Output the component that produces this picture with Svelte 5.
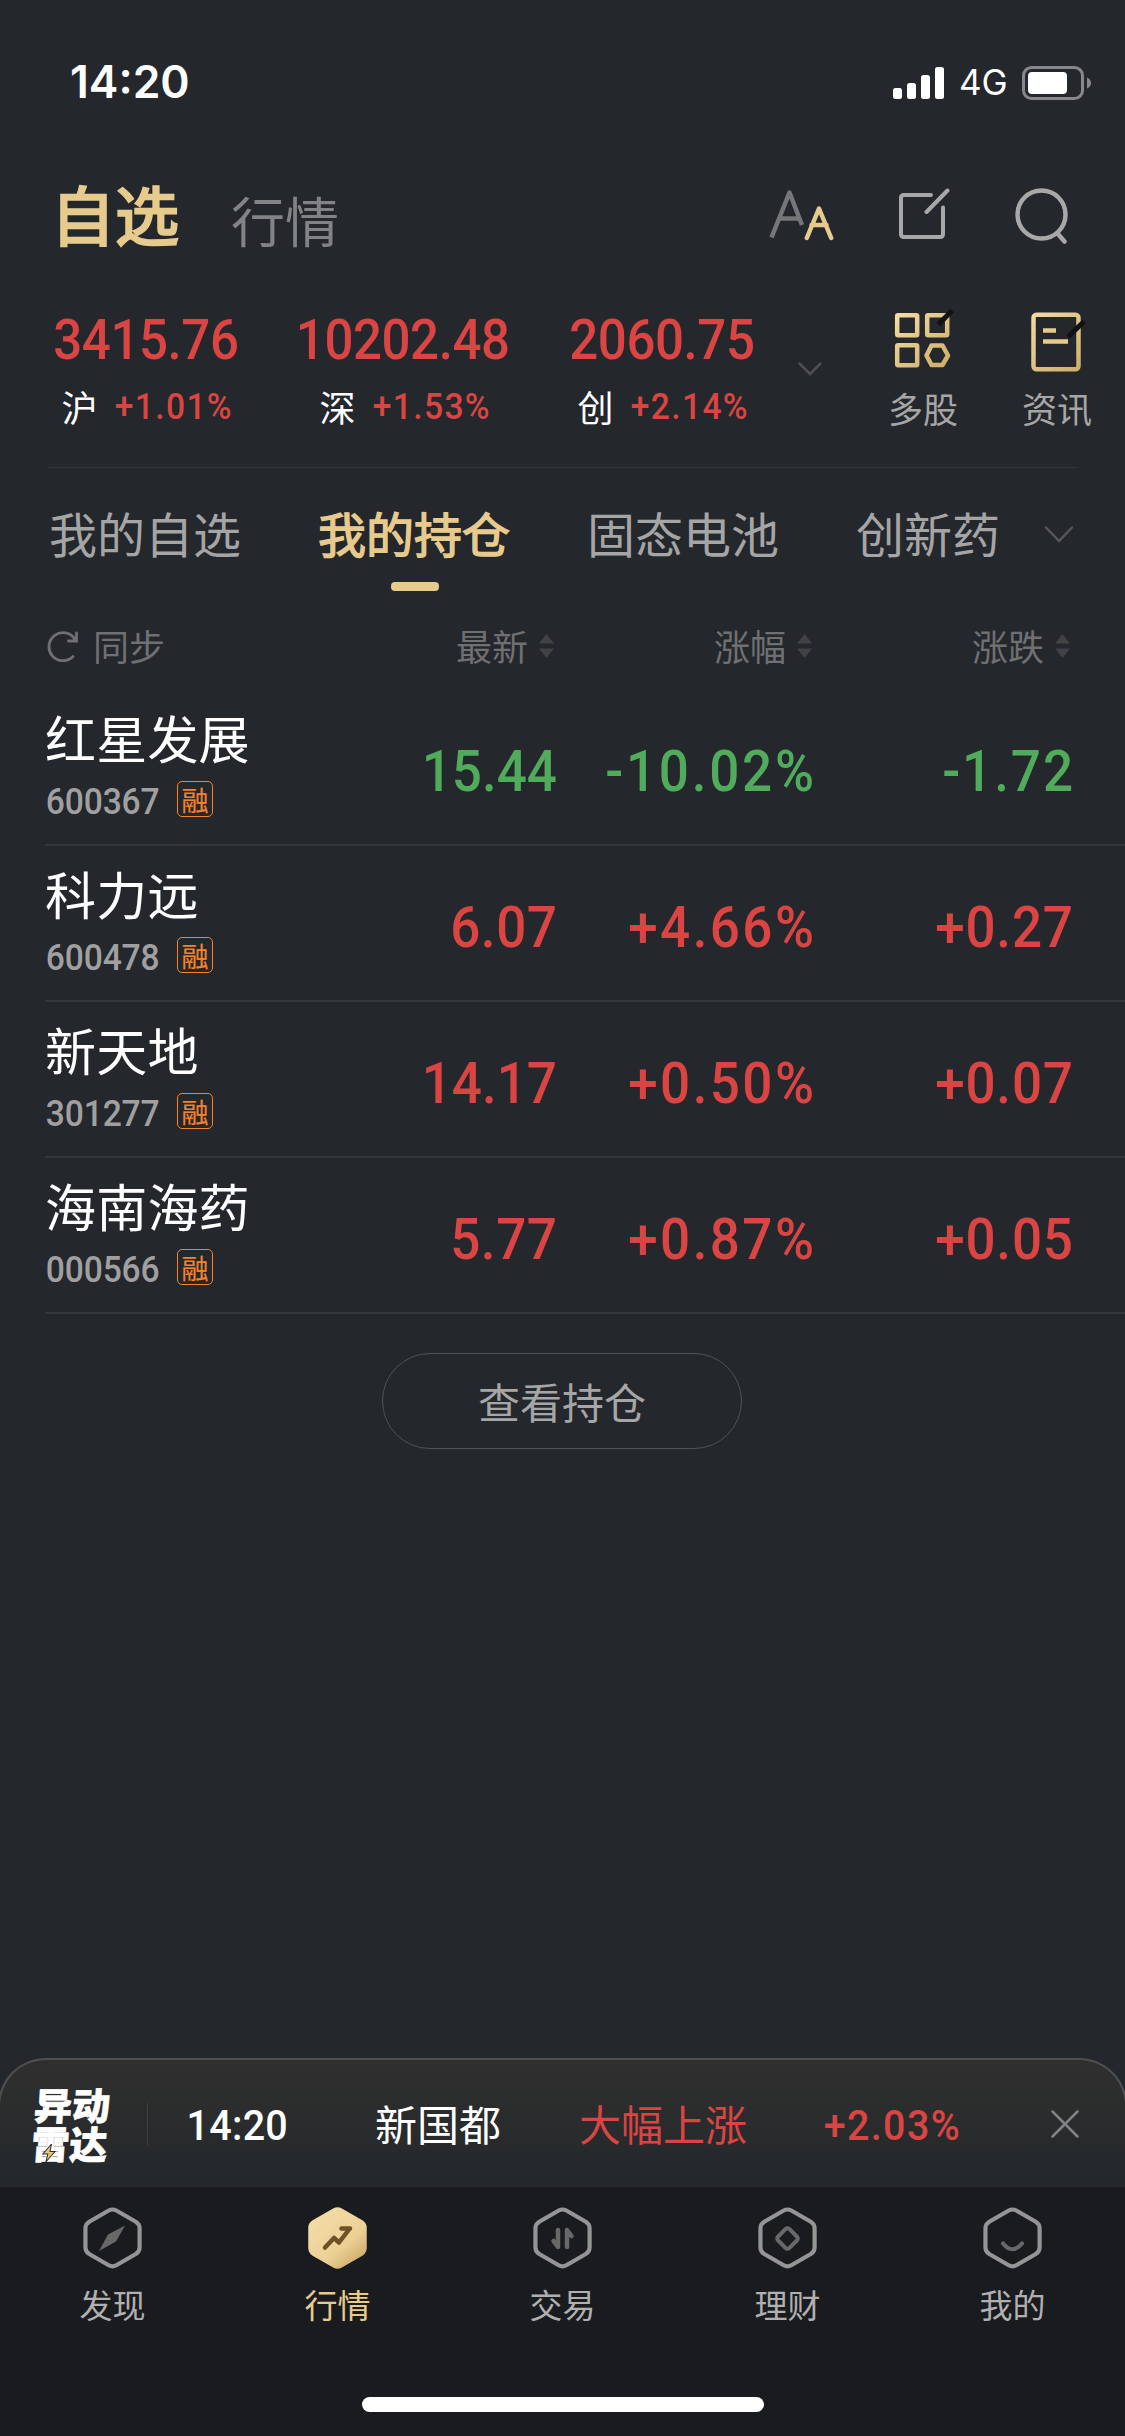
<script lang="ts">
    const indices = [
        { value: "3415.76", width: 183, name: "沪", change: "+1.01%" },
        { value: "10202.48", width: 210, name: "深", change: "+1.53%" },
        { value: "2060.75", width: 183, name: "创", change: "+2.14%" },
    ];

    const tabs = ["我的自选", "我的持仓", "固态电池", "创新药"];
    const activeTab = "我的持仓";

    const columns = ["最新", "涨幅", "涨跌"];

    const stocks = [
        { name: "红星发展", code: "600367", price: "15.44", priceW: 131, rate: "-10.02%", rateW: 206, diff: "-1.72", diffW: 128, down: true },
        { name: "科力远", code: "600478", price: "6.07", priceW: 104, rate: "+4.66%", rateW: 183, diff: "+0.27", diffW: 135, down: false },
        { name: "新天地", code: "301277", price: "14.17", priceW: 131, rate: "+0.50%", rateW: 183, diff: "+0.07", diffW: 135, down: false },
        { name: "海南海药", code: "000566", price: "5.77", priceW: 104, rate: "+0.87%", rateW: 183, diff: "+0.05", diffW: 135, down: false },
    ];

    const nav = [
        { label: "发现", icon: "find" },
        { label: "行情", icon: "market" },
        { label: "交易", icon: "trade" },
        { label: "理财", icon: "wealth" },
        { label: "我的", icon: "mine" },
    ];

    const hex = "M25.5 3.2Q29.5 1 33.5 3.2L54 15Q58 17.500 58 22V42Q58 46.500 54 49L33.500 60.800Q29.500 63 25.500 60.800L5 49Q1 46.500 1 42V22Q1 17.500 5 15Z";

    // horizontal squeeze of the figures
    const squeeze = 0.92;
    const bearing = (text: string) => (text[0] === "1" ? 0.08 : 0.045);
</script>

<!-- condensed figures, w and h are the size of the ink -->
{#snippet num(text: string, w: number, h: number)}
    <svg class="num" width={w} height={h} viewBox="0 0 {w} {h}">
        <text
            transform="scale({squeeze} 1)"
            x={(-h * bearing(text)) / squeeze}
            y={h}
            font-size={h / 0.711}
            textLength={(w + h * (bearing(text) + 0.025)) / squeeze}
            lengthAdjust="spacing">{text}</text>
    </svg>
{/snippet}

<main>
    <div class="status">
        <span class="time">14:20</span>
        <svg class="signal" width="51" height="32" viewBox="0 0 51 32" fill="#fff">
            <rect x="0" y="21" width="9" height="11" rx="2.500" />
            <rect x="14" y="16" width="9" height="16" rx="2.500" />
            <rect x="28" y="8" width="9" height="24" rx="2.500" />
            <rect x="42" y="0" width="9" height="32" rx="2.500" />
        </svg>
        <span class="network">4G</span>
        <svg width="70" height="34" viewBox="0 0 70 34">
            <rect x="1.500" y="1.500" width="59" height="31" rx="8" fill="none" stroke="#85878a" stroke-width="3" />
            <rect x="6" y="6" width="39" height="22" rx="4" fill="#fff" />
            <path d="M65 11.500Q69 13 69 17T65 22.500Z" fill="#85878a" />
        </svg>
    </div>

    <header>
        <h1>自选</h1>
        <span class="sub">行情</span>
        <div class="tools">
            <svg width="66" height="56" viewBox="0 0 66 56" fill="none" stroke-linecap="round" stroke-linejoin="round">
                <path d="M3.500 50.500L21.500 5.500L34 38M11 31.500H31" stroke="#757677" stroke-width="4.500" stroke-linecap="butt" />
                <path d="M38.800 51L51 21.500L63.200 51M43.500 38H58.500" stroke="#e7cb8d" stroke-width="4.500" />
            </svg>
            <svg width="52" height="56" viewBox="0 0 52 56" fill="none" stroke="#a8a8a8" stroke-width="4" stroke-linecap="round">
                <path d="M33 8H6Q3 8 3 11V47Q3 50 6 50H42Q45 50 45 47V20.500M28.500 25L49.500 3.500" />
            </svg>
            <svg width="56" height="58" viewBox="0 0 56 58" fill="none" stroke="#a8a8a8" stroke-width="4.500" stroke-linecap="round">
                <circle cx="27.500" cy="28.500" r="24" />
                <path d="M44 48L50.500 55.500" />
            </svg>
        </div>
    </header>

    <section class="overview">
        {#each indices as item}
            <div class="index">
                {@render num(item.value, item.width, 39.5)}
                <div class="index-sub">
                    <span>{item.name}</span>
                    {@render num(item.change, 115, 26)}
                </div>
            </div>
        {/each}
        <svg class="more" width="24" height="14" viewBox="0 0 24 14" fill="none" stroke="#4d4f52" stroke-width="2.500" stroke-linecap="round">
            <path d="M1.500 1.500L12 12L22.500 1.500" />
        </svg>
        <div class="entry multi">
            <svg width="62" height="66" viewBox="0 0 62 66" fill="none">
                <defs>
                    <linearGradient id="gold" gradientUnits="userSpaceOnUse" x1="4" y1="4" x2="56" y2="62">
                        <stop offset="0" stop-color="#f3dca6" />
                        <stop offset="1" stop-color="#cdac68" />
                    </linearGradient>
                </defs>
                <g stroke="url(#gold)" stroke-width="4.500">
                    <rect x="5.200" y="6.200" width="20" height="20" rx="1" />
                    <rect x="35.200" y="6.200" width="20" height="20" rx="1" />
                    <rect x="5.200" y="36.200" width="20" height="20" rx="1" />
                    <path d="M39.500 36.500H50.500L56 46.500L50.500 56H39.500L34.500 46.500Z" stroke-linejoin="round" />
                </g>
                <path d="M46.500 15.500L60 1.500" stroke="#111214" stroke-width="5" />
            </svg>
            <span>多股</span>
        </div>
        <div class="entry">
            <svg width="62" height="66" viewBox="0 0 62 66" fill="none">
                <rect x="7.500" y="5.800" width="45" height="54.500" rx="3" stroke="url(#gold)" stroke-width="4.500" />
                <path d="M17 21.500H30M17 32.500H42" stroke="#e7cb8d" stroke-width="4.500" />
                <path d="M42 28L58 12.500" stroke="#111214" stroke-width="5" />
            </svg>
            <span>资讯</span>
        </div>
    </section>

    <nav class="tabs">
        {#each tabs as tab}
            <span class="tab" class:active={tab === activeTab}>{tab}</span>
        {/each}
        <svg width="30" height="17" viewBox="0 0 30 17" fill="none" stroke="#55575a" stroke-width="2.500" stroke-linecap="round">
            <path d="M2 1.500L15 15L28 1.500" />
        </svg>
    </nav>

    <div class="table-head">
        <div class="sync">
            <svg width="32" height="32" viewBox="0 0 32 32" fill="none" stroke="#6f7072" stroke-width="2.800" stroke-linecap="round">
                <path d="M26 26.500A14 14 0 1 1 28 9.500M29.500 3V11H21.500" />
            </svg>
            <span>同步</span>
        </div>
        {#each columns as column}
            <div class="col">
                <span>{column}</span>
                <svg width="15" height="24" viewBox="0 0 15 24" fill="#404244">
                    <path d="M7.500 0L15 9.500H0ZM0 14.500H15L7.500 24Z" />
                </svg>
            </div>
        {/each}
    </div>

    <div class="list">
        {#each stocks as stock}
            <div class="row" class:down={stock.down}>
                <div class="info">
                    <div class="name">{stock.name}</div>
                    <div class="code">
                        {@render num(stock.code, 112, 26)}
                        <span class="badge">融</span>
                    </div>
                </div>
                <div class="cell">{@render num(stock.price, stock.priceW, 41)}</div>
                <div class="cell">{@render num(stock.rate, stock.rateW, 41)}</div>
                <div class="cell">{@render num(stock.diff, stock.diffW, 41)}</div>
            </div>
        {/each}
    </div>

    <button class="view">查看持仓</button>

    <div class="radar">
        <div class="logo">
            <span>异动</span>
            <span>雷达</span>
            <svg width="14" height="18" viewBox="0 0 14 18">
                <path d="M9 0L1 10H6L4.500 18L13 7.500H8Z" fill="#e7c57d" stroke="#292b2c" stroke-width="1" />
            </svg>
        </div>
        <i class="line"></i>
        <div class="radar-time">{@render num("14:20", 98, 30.5)}</div>
        <span class="radar-name">新国都</span>
        <span class="radar-event">大幅上涨</span>
        <div class="radar-rate">{@render num("+2.03%", 134, 30.5)}</div>
        <svg width="28" height="28" viewBox="0 0 28 28" stroke="#818282" stroke-width="2.500" stroke-linecap="round">
            <path d="M1.500 1.500L26.500 26.500M26.500 1.500L1.500 26.500" />
        </svg>
    </div>

    <footer>
        <div class="nav">
            {#each nav as item}
                <div class="nav-item" class:current={item.icon === "market"}>
                    <svg width="59" height="64" viewBox="0 0 59 64" fill="none" stroke-linecap="round" stroke-linejoin="round">
                        {#if item.icon === "market"}
                            <defs>
                                <linearGradient id="fill" x1="0.2" y1="0.1" x2="0.9" y2="0.95">
                                    <stop offset="0" stop-color="#f3dba6" />
                                    <stop offset="0.6" stop-color="#ecd196" />
                                    <stop offset="1" stop-color="#cba866" />
                                </linearGradient>
                            </defs>
                            <path d={hex} fill="url(#fill)" stroke="url(#fill)" stroke-width="1.500" />
                            <path d="M17 41.500L26 32L31 36.500L41 23.500M33.500 22.500H42" stroke="#6e5225" stroke-width="4.500" />
                        {:else}
                            <path d={hex} stroke="#959595" stroke-width="4.400" transform="translate(1.500 1.500) scale(0.95)" />
                        {/if}
                        {#if item.icon === "find"}
                            <path d="M42 19.500L33 35.500L16 45L25 28.500Z" fill="#686868" />
                        {:else if item.icon === "trade"}
                            <path d="M25 24V41L20.500 35M34 41V24L38.500 30" stroke="#686868" stroke-width="4.500" />
                        {:else if item.icon === "wealth"}
                            <rect x="21.500" y="24.500" width="16" height="16" rx="2.500" transform="rotate(45 29.500 32.500)" stroke="#686868" stroke-width="4" />
                        {:else if item.icon === "mine"}
                            <path d="M20 37.500Q29.500 49 39 37.500" stroke="#686868" stroke-width="4.200" />
                        {/if}
                    </svg>
                    <span>{item.label}</span>
                </div>
            {/each}
        </div>
        <div class="home"></div>
    </footer>
</main>

<style>
    :global(body) {
        background: #24272c;
    }

    main {
        box-sizing: border-box;
        width: 1125px;
        height: 2436px;
        display: flex;
        flex-direction: column;
        overflow: hidden;
        background: #24272c;
        color: #fff;
        font-family: "Noto Sans CJK SC", sans-serif;
        line-height: 1;
    }

    svg {
        display: block;
        flex-shrink: 0;
    }

    .num {
        overflow: visible;
        fill: currentColor;
        font-family: Roboto, sans-serif;
        font-weight: 500;
    }

    .status {
        height: 164px;
        box-sizing: border-box;
        padding: 1px 33px 0 70px;
        display: flex;
        align-items: center;
        font-family: Inter, sans-serif;
    }
    .time {
        flex: 1;
        font-size: 44.5px;
        font-weight: 600;
    }
    .network {
        margin: 0 15px 0 15px;
        font-size: 35px;
        font-weight: 400;
        width: 48px;
    }

    header {
        height: 108px;
        padding: 0 55px 0 51px;
        display: flex;
        align-items: center;
    }
    h1 {
        margin: 0 0 13px;
        font-size: 64px;
        font-weight: 400;
        -webkit-text-stroke: 2.4px #e7cb8d;
        color: #e7cb8d;
    }
    .sub {
        margin: 4px 0 0 52px;
        font-size: 54px;
        color: #828384;
    }
    .tools {
        margin: 0 0 6px auto;
        display: flex;
        align-items: center;
        gap: 64px;
    }

    .overview {
        height: 196px;
        margin: 0 48px;
        box-sizing: border-box;
        padding: 36px 0 0;
        display: flex;
        align-items: flex-start;
        border-bottom: 1px solid #33373b;
    }
    .index {
        width: 258px;
        flex-shrink: 0;
        display: flex;
        flex-direction: column;
        align-items: center;
        margin-top: 11px;
        color: #da4543;
    }
    .index:first-child {
        margin-left: -31px;
    }
    .index-sub {
        margin-top: 30px;
        display: flex;
        align-items: center;
        gap: 18px;
    }
    .index-sub span {
        margin-top: -1px;
        font-size: 36px;
        color: #fff;
    }
    .more {
        margin: 54px 0 0 7px;
    }
    .entry {
        display: flex;
        flex-direction: column;
        align-items: center;
        gap: 15px;
        margin-top: 1px;
        font-size: 35px;
        color: #a6a6a6;
    }
    .entry.multi {
        margin: 1px 64px 0 66px;
    }
    .entry span {
        white-space: nowrap;
    }

    .tabs {
        height: 135px;
        box-sizing: border-box;
        padding: 40px 51px 0 49px;
        display: flex;
        align-items: flex-start;
        gap: 77px;
        font-size: 48px;
        color: #a5a5a5;
    }
    .tab {
        display: flex;
        flex-direction: column;
        align-items: center;
        white-space: nowrap;
    }
    .tab.active {
        color: #e7cb8d;
        -webkit-text-stroke: 1.4px #e7cb8d;
    }
    .tab.active::after {
        content: "";
        width: 48px;
        height: 9px;
        margin: 26px 0 0 2px;
        border-radius: 4px;
        background: #e7cb8d;
    }
    .tabs svg {
        margin: 18px 0 0 -33px;
    }

    .table-head {
        height: 87px;
        box-sizing: border-box;
        padding: 25px 55px 0 47px;
        display: grid;
        grid-template-columns: 1fr 258px 258px 258px;
        font-size: 36px;
        color: #6f7072;
        align-items: start;
    }
    .table-head span {
        margin-top: -1px;
    }
    .sync, .col {
        display: flex;
        align-items: center;
    }
    .sync {
        gap: 14px;
    }
    .col {
        justify-content: flex-end;
        gap: 11px;
    }

    .row {
        height: 156px;
        margin-left: 45px;
        padding-right: 53px;
        box-sizing: border-box;
        border-bottom: 2px solid #34383b;
        display: grid;
        grid-template-columns: 1fr 190px 257px 259px;
        color: #da4543;
    }
    .row.down {
        color: #50ab5b;
    }
    .info {
        padding: 22px 0 0;
    }
    .name {
        font-size: 51px;
        letter-spacing: 0.2px;
        color: #fff;
        white-space: nowrap;
    }
    .code {
        margin: 18px 0 0 2px;
        display: flex;
        align-items: center;
        gap: 18px;
        color: #a0a0a0;
    }
    .code :global(.num) {
        margin-top: 4px;
    }
    .badge {
        box-sizing: border-box;
        width: 36px;
        height: 36px;
        border: 1.500px solid #f5832a;
        border-radius: 5px;
        display: flex;
        align-items: center;
        justify-content: center;
        font-size: 27px;
        -webkit-text-stroke: 0.2px #f5832a;
        color: #f5832a;
    }
    .cell {
        padding-top: 60px;
        display: flex;
        justify-content: flex-end;
    }

    .view {
        width: 360px;
        height: 96px;
        margin: 39px 0 0 382px;
        padding: 0 0 2px;
        border: 1px solid #505355;
        border-radius: 48px;
        background: none;
        color: #a6a6a6;
        font: 42px "Noto Sans CJK SC", sans-serif;
    }

    .radar {
        box-sizing: border-box;
        height: 129px;
        margin: auto -2px 0;
        padding: 0 46px 0 33px;
        border: 2px solid #4f5050;
        border-bottom: 0;
        border-radius: 48px 48px 0 0;
        background: linear-gradient(#2f2f2e, #24282b);
        display: flex;
        align-items: center;
        font-size: 42px;
        white-space: nowrap;
    }
    .logo {
        position: relative;
        width: 76px;
        margin-top: -2px;
        font-size: 38px;
        line-height: 39px;
        font-weight: 900;
        -webkit-text-stroke: 0.6px #fff;
        transform: skewX(-4deg);
    }
    .logo span {
        display: block;
    }
    .logo svg {
        position: absolute;
        left: 11px;
        bottom: 0;
    }
    .line {
        width: 1px;
        height: 42px;
        margin: 0 41px 0 38px;
        background: #3c3e3f;
    }
    .radar-time {
        margin-top: 2px;
    }
    .radar-name {
        margin: -1px 0 0 88px;
    }
    .radar-event {
        margin: -1px 0 0 78px;
        color: #da4543;
    }
    .radar-rate {
        margin: 2px auto 0 78px;
        color: #da4543;
    }

    footer {
        height: 249px;
        background: #1a1b1f;
    }
    .nav {
        height: 210px;
        display: grid;
        grid-template-columns: repeat(5, 1fr);
    }
    .nav-item {
        padding-top: 19px;
        display: flex;
        flex-direction: column;
        align-items: center;
        gap: 18px;
        font-size: 33px;
        color: #b0b0b0;
    }
    .nav-item.current {
        color: #e7cb8d;
    }
    .home {
        width: 402px;
        height: 15px;
        margin: 0 auto;
        border-radius: 8px;
        background: #fff;
    }
</style>
